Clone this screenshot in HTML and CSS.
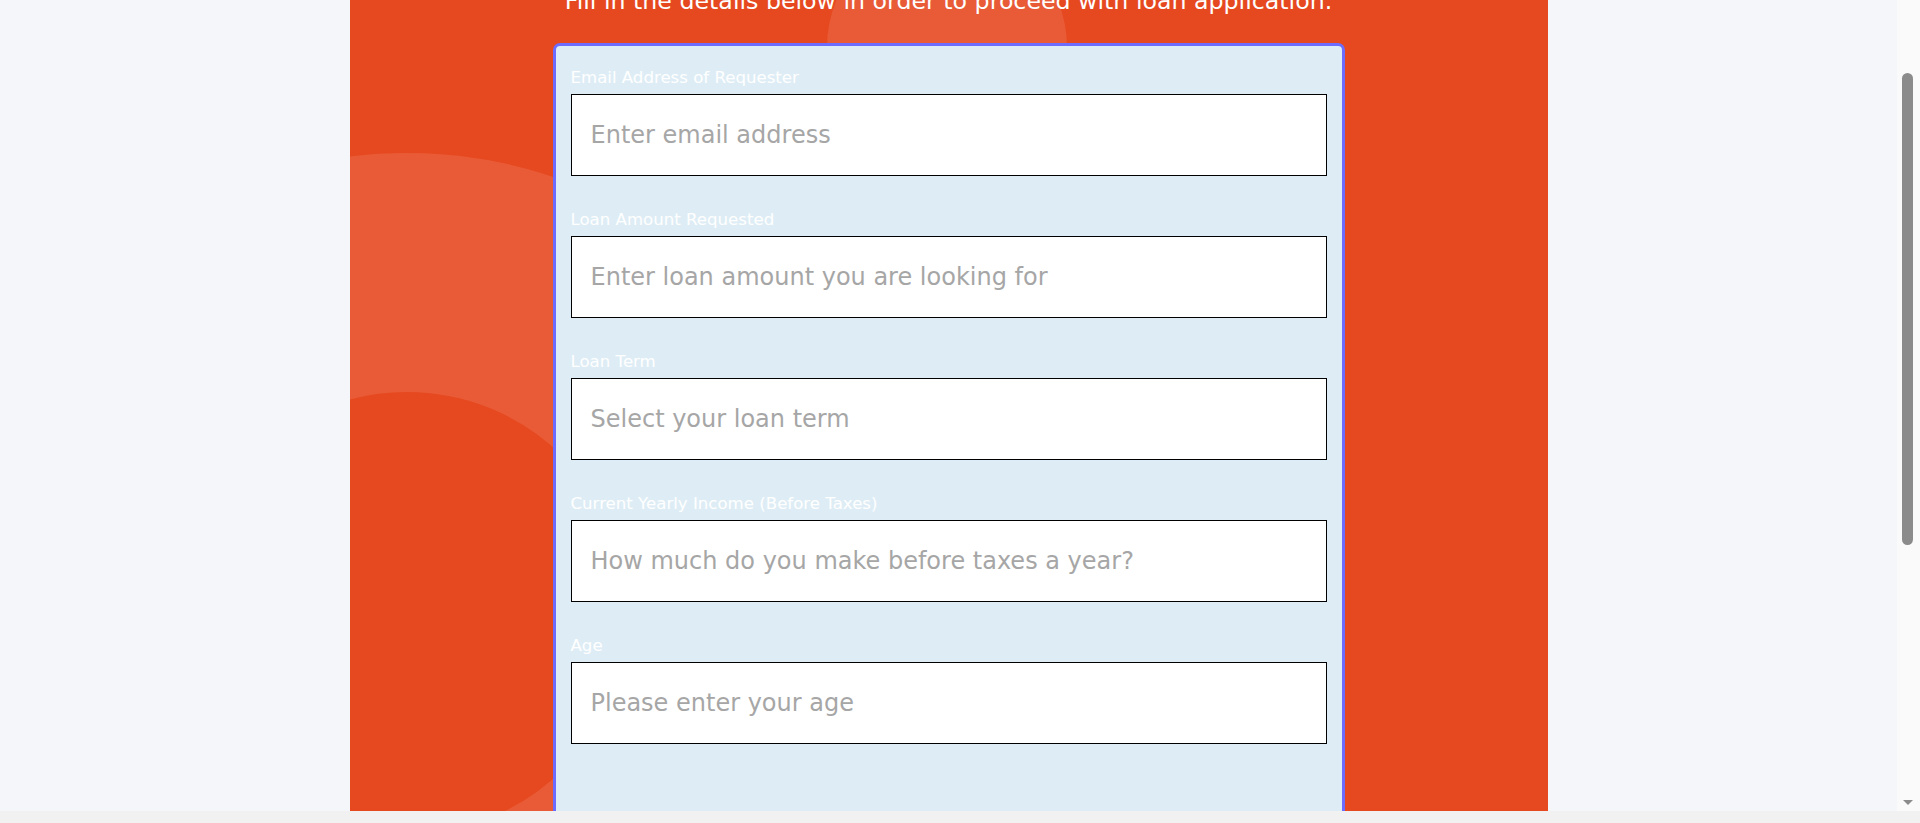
FILE: index.html
```html
<!DOCTYPE html>
<html lang="en">
<head>
<meta charset="utf-8">
<title>Loan Application</title>
<link rel="stylesheet" href="styles.css">
</head>
<body>
<main class="panel">
  <span class="deco deco-top"></span>
  <span class="deco deco-ring"></span>
  <p class="subtitle">Fill in the details below in order to proceed with loan application.</p>
  <form class="card">
    <div class="field">
      <label class="label" for="email">Email Address of Requester</label>
      <input class="input" id="email" type="email" placeholder="Enter email address">
    </div>
    <div class="field">
      <label class="label" for="amount">Loan Amount Requested</label>
      <input class="input" id="amount" type="text" placeholder="Enter loan amount you are looking for">
    </div>
    <div class="field">
      <label class="label" for="term">Loan Term</label>
      <input class="input" id="term" type="text" placeholder="Select your loan term">
    </div>
    <div class="field">
      <label class="label" for="income">Current Yearly Income (Before Taxes)</label>
      <input class="input" id="income" type="text" placeholder="How much do you make before taxes a year?">
    </div>
    <div class="field">
      <label class="label" for="age">Age</label>
      <input class="input" id="age" type="text" placeholder="Please enter your age">
    </div>
  </form>
</main>
<div class="scrollbar-v" aria-hidden="true">
  <span class="scrollbar-thumb"></span>
  <span class="scrollbar-arrow"></span>
</div>
<div class="scrollbar-h" aria-hidden="true"></div>
<script src="main.js"></script>
</body>
</html>
```

FILE: styles.css
```css
html, body {
  margin: 0;
  padding: 0;
}

body {
  padding-right: 23px;
  background: #f5f6fa;
  font-family: "DejaVu Sans", "Open Sans", sans-serif;
}

.panel {
  position: relative;
  overflow: hidden;
  width: 1198px;
  margin: 0 auto;
  padding: 84px 0 93px;
  background: #e64920;
}

.deco {
  position: absolute;
  border-radius: 50%;
  pointer-events: none;
}

.deco-top {
  left: 477px;
  top: 25px;
  width: 240px;
  height: 240px;
  background: rgba(255, 255, 255, 0.1);
}

.deco-ring {
  left: -403px;
  top: 251px;
  width: 920px;
  height: 920px;
  box-sizing: border-box;
  border: 239px solid rgba(255, 255, 255, 0.1);
}

.subtitle {
  position: relative;
  z-index: 1;
  margin: 0 0 27px;
  color: #ffffff;
  font-size: 23.7px;
  line-height: 30px;
  text-align: center;
}

.card {
  position: relative;
  z-index: 1;
  box-sizing: border-box;
  width: 792px;
  margin: 0 auto;
  padding: 21px 15px 400px;
  background: #deedf5;
  border: 3px solid #6c6cfe;
  border-radius: 7px;
}

.field {
  display: flex;
  flex-direction: column;
  margin-bottom: 33px;
}

.field:last-child {
  margin-bottom: 0;
}

.label {
  margin-bottom: 5px;
  color: #ffffff;
  font-size: 16.6px;
  line-height: 22px;
}

.input {
  box-sizing: border-box;
  width: 100%;
  height: 82px;
  margin: 0;
  padding: 0 19px;
  border: 1px solid #000000;
  border-radius: 0;
  background: #ffffff;
  font-family: inherit;
  font-size: 24px;
  color: #333333;
  outline: none;
}

.input::placeholder {
  color: #a6a6a6;
  opacity: 1;
}

/* visual stand-in for the browser scrollbars shown in the capture */
.scrollbar-v {
  position: fixed;
  top: 0;
  right: 0;
  bottom: 12px;
  width: 23px;
  background: #fafafa;
  z-index: 10;
}

.scrollbar-thumb {
  position: absolute;
  top: 73px;
  left: 5px;
  width: 11px;
  height: 472px;
  border-radius: 6px;
  background: #8b8b8b;
}

.scrollbar-arrow {
  position: absolute;
  bottom: 6px;
  left: 6px;
  width: 0;
  height: 0;
  border-left: 5px solid transparent;
  border-right: 5px solid transparent;
  border-top: 5px solid #8b8b8b;
}

.scrollbar-h {
  position: fixed;
  left: 0;
  right: 0;
  bottom: 0;
  height: 12px;
  background: #f1f1f1;
  z-index: 10;
}
```

FILE: main.js
```js
window.scrollTo(0, 98);
```
